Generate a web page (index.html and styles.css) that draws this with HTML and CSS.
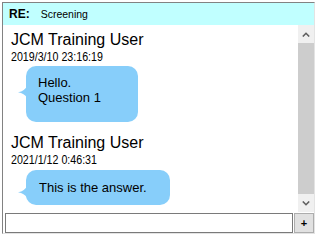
FILE: index.html
```html
<!DOCTYPE html>
<html>
<head>
<meta charset="utf-8">
<link rel="stylesheet" href="styles.css">
</head>
<body>
<div class="frame">
  <div class="header"><span class="re">RE:</span><span class="subject">Screening</span></div>
  <div class="middle">
    <div class="chat">
      <div class="msg">
        <div class="name">JCM Training User</div>
        <div class="date"><span class="date-text">2019/3/10 23:16:19</span></div>
        <div class="bubble bubble-a"><svg class="tail" viewBox="0 0 9 12" width="9" height="12"><path d="M9 0 Q7 5 0 6.3 Q6.5 7.2 9 12 Z"/></svg>Hello.<br>Question 1</div>
      </div>
      <div class="msg">
        <div class="name">JCM Training User</div>
        <div class="date"><span class="date-text">2021/1/12 0:46:31</span></div>
        <div class="bubble bubble-b"><svg class="tail" viewBox="0 0 9 12" width="9" height="12"><path d="M9 0 Q7 5 0 6.3 Q6.5 7.2 9 12 Z"/></svg>This is the answer.</div>
      </div>
    </div>
    <div class="scrollbar">
      <div class="sb-btn"><svg viewBox="0 0 8 5" width="8" height="5"><path d="M0.8 4.5 L4 1.3 L7.2 4.5"/></svg></div>
      <div class="sb-thumb"></div>
      <div class="sb-btn"><svg viewBox="0 0 8 5" width="8" height="5"><path d="M0.8 0.5 L4 3.7 L7.2 0.5"/></svg></div>
    </div>
  </div>
  <div class="composer">
    <input class="input" type="text">
    <button class="plus" type="button">+</button>
  </div>
</div>
</body>
</html>
```
FILE: styles.css
```css
html, body {
  margin: 0;
  background: #fff;
}
body {
  font-family: "Liberation Sans", Arial, sans-serif;
  color: #000;
}
.frame {
  margin: 2px 0 0 2px;
  width: 313px;
  height: 232px;
  box-sizing: border-box;
  border: 1px solid;
  border-color: #828282 #e3e3e3 #e3e3e3 #828282;
  display: flex;
  flex-direction: column;
  background: #fff;
}
.header {
  height: 22px;
  flex: none;
  background: #c0ffff;
  font-size: 12px;
  line-height: 22px;
  padding-left: 6px;
  white-space: nowrap;
}
.re {
  font-weight: bold;
}
.subject {
  font-size: 10.5px;
  margin-left: 11px;
}
.middle {
  height: 187px;
  flex: none;
  display: flex;
}
.chat {
  flex: 1;
  padding: 5px 0 0 8px;
  overflow: hidden;
}
.msg + .msg {
  margin-top: 11px;
}
.name {
  font-size: 16px;
  line-height: 19px;
  white-space: nowrap;
}
.date {
  font-size: 13px;
  line-height: 15px;
  white-space: nowrap;
}
.date-text {
  display: inline-block;
  transform: scaleX(0.82);
  transform-origin: left center;
}
.bubble {
  position: relative;
  margin: 2px 0 0 15px;
  background: #87cefa;
  border-radius: 10px;
  font-size: 13px;
  line-height: 15px;
  box-sizing: border-box;
  white-space: nowrap;
}
.bubble-a {
  width: 112px;
  padding: 9px 12px 17px 12px;
}
.bubble-b {
  width: 144px;
  margin-top: 3px;
  padding: 10px 12px 10px 13px;
}
.tail {
  position: absolute;
  left: -8px;
  display: block;
  fill: #87cefa;
}
.bubble-a .tail {
  top: 20px;
}
.bubble-b .tail {
  top: 16px;
}
.scrollbar {
  width: 16px;
  flex: none;
  display: flex;
  flex-direction: column;
  background: #f0f0f0;
}
.sb-btn {
  height: 18px;
  flex: none;
  display: flex;
  align-items: center;
  justify-content: center;
}
.sb-btn svg {
  display: block;
  fill: none;
  stroke: #606060;
  stroke-width: 1.6;
}
.sb-thumb {
  flex: 1;
  background: #cdcdcd;
}
.composer {
  height: 21px;
  flex: none;
  box-sizing: border-box;
  padding: 1px 0 0 2px;
  display: flex;
  gap: 1px;
}
.input {
  width: 288px;
  height: 20px;
  box-sizing: border-box;
  margin: 0;
  padding: 0 2px;
  border: 1px solid #7a7a7a;
  background: #fff;
  outline: none;
  font: 12px "Liberation Sans", Arial, sans-serif;
}
.plus {
  width: 20px;
  height: 20px;
  box-sizing: border-box;
  margin: 0;
  padding: 0;
  border: 1px solid #adadad;
  background: #e1e1e1;
  color: #000;
  font: bold 11px "Liberation Sans", Arial, sans-serif;
  display: flex;
  align-items: center;
  justify-content: center;
}
```
